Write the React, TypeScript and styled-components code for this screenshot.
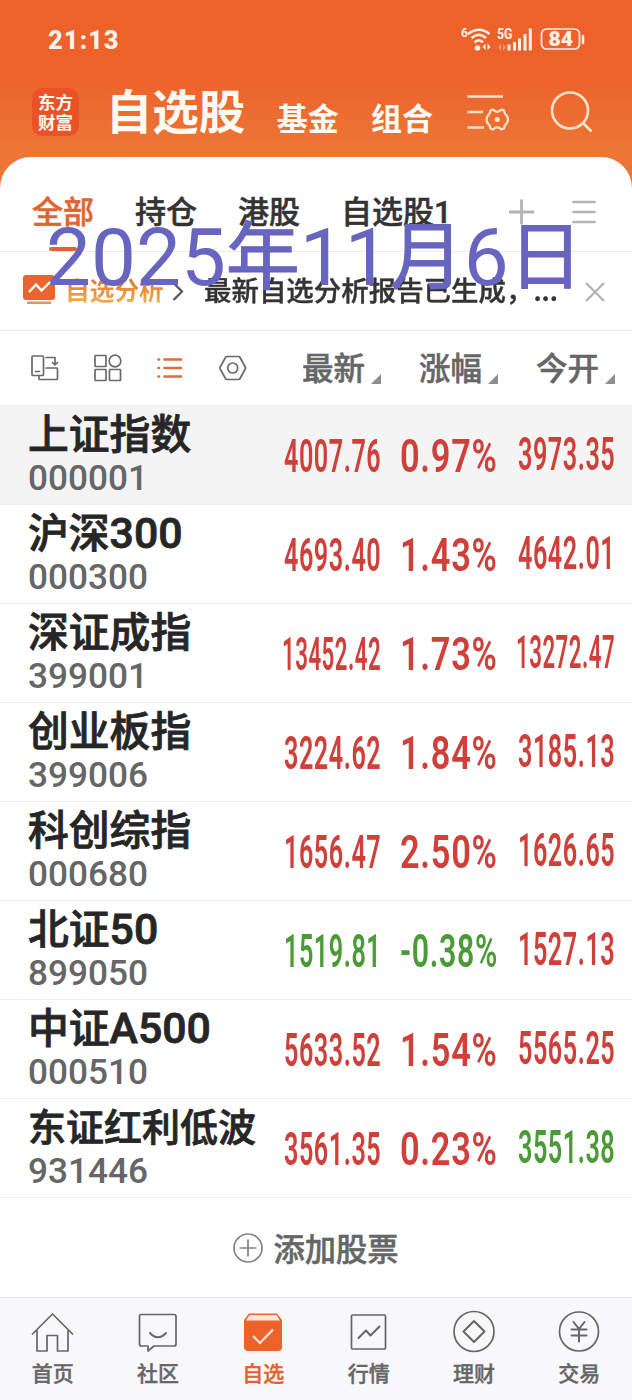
import React, { useLayoutEffect, useRef, useState } from 'react';
import styled, { createGlobalStyle } from 'styled-components';

const CJK = '"Noto Sans CJK SC", sans-serif';
const DIGIT = 'Roboto, "Noto Sans CJK SC", sans-serif';

const GlobalStyle = createGlobalStyle`
  * { box-sizing: border-box; }
  body { margin: 0; background: #fff; font-family: ${CJK}; }
  svg { display: block; flex: none; }
`;

/* ---------- shared ---------- */

const FitBox = styled.span<{ $w: number }>`
  display: block;
  flex: none;
  width: ${p => p.$w}px;
  white-space: nowrap;
`;
const FitInner = styled.span`
  display: inline-block;
  transform-origin: 0 50%;
`;

/* Condenses or widens one line of text to fill the given width. */
function FitText({ width, children, className }: { width: number; children: React.ReactNode; className?: string }) {
  const ref = useRef<HTMLSpanElement>(null);
  const [scale, setScale] = useState(1);
  useLayoutEffect(() => {
    if (ref.current && ref.current.offsetWidth) setScale(width / ref.current.offsetWidth);
  }, [width, children]);
  return (
    <FitBox $w={width} className={className}>
      <FitInner ref={ref} style={{ transform: `scaleX(${scale})` }}>{children}</FitInner>
    </FitBox>
  );
}

const Screen = styled.div`
  position: relative;
  width: 632px;
  height: 1400px;
  display: flex;
  flex-direction: column;
  overflow: hidden;
  background: linear-gradient(#ed622b 0, #ed622b 76px, #ec7636 150px, #ec7636 100%);
`;

/* ---------- status bar ---------- */

const StatusBar = styled.div`
  height: 80px;
  flex: none;
  display: flex;
  justify-content: space-between;
  padding: 0 45px 0 48px;
  color: #fff1e8;
`;
const Clock = styled(FitText)`
  font: 900 25px/81px ${DIGIT};
  letter-spacing: 1px;
`;
const StatusIcons = styled.div`
  display: flex;
  padding-top: 24px;
`;

/* ---------- title bar ---------- */

const TitleBar = styled.div`
  height: 77px;
  flex: none;
  display: flex;
  padding: 0 36px 0 32px;
  color: #fffaf3;
`;
const Logo = styled.div`
  width: 47px;
  height: 48px;
  margin-top: 8px;
  border-radius: 10px;
  background: #ea5328;
  font: 700 17.5px/19.5px ${CJK};
  padding: 4px 0 0 6px;
  white-space: pre;
`;
const Title = styled.h1`
  margin: 0 0 0 27px;
  width: 172px;
  font: 700 46.5px/57px ${CJK};
`;
const TitleLink = styled.div`
  width: 95px;
  font: 700 31px/73px ${CJK};
`;
const FilterButton = styled.div`
  padding-top: 12px;
  margin-left: 1px;
  width: 84px;
`;
const SearchButton = styled.div`
  padding-top: 10px;
`;

/* ---------- sheet ---------- */

const Sheet = styled.div`
  flex: 1;
  display: flex;
  flex-direction: column;
  border-radius: 31px 31px 0 0;
  background: #fff;
  overflow: hidden;
`;
const Tabs = styled.div`
  height: 95px;
  flex: none;
  display: flex;
  padding-left: 32px;
  border-bottom: 1px solid #ececec;
`;
const Tab = styled.div<{ $active?: boolean; $w: number }>`
  width: ${p => p.$w}px;
  flex: none;
  padding-top: 32px;
  font: 500 31px/48px ${DIGIT};
  -webkit-text-stroke: 0.5px currentColor;
  color: ${p => (p.$active ? '#e2632f' : '#333')};
  &::after {
    content: '';
    display: ${p => (p.$active ? 'block' : 'none')};
    width: 28px;
    height: 4px;
    margin: 10px 0 0 17px;
    border-radius: 2px;
    background: #e2632f;
  }
`;
const TabTool = styled.div`
  padding-top: 42px;
  width: 63px;
`;

const Notice = styled.div`
  height: 79px;
  flex: none;
  display: flex;
  padding-left: 22px;
  border-bottom: 1px solid #ececec;
`;
const NoticeIcon = styled.div`
  padding-top: 21px;
  width: 43px;
`;
const NoticeTitle = styled.div`
  font: 700 24.7px/74px ${CJK};
  background: linear-gradient(#e8702f 25px, #eeb050 52px);
  -webkit-background-clip: text;
  background-clip: text;
  color: transparent;
  width: 106px;
  white-space: nowrap;
`;
const NoticeText = styled(FitText)`
  margin-left: 18px;
  font: 500 27.3px/75px ${CJK};
  -webkit-text-stroke: 0.4px currentColor;
  color: #333;
`;
const NoticeArrow = styled.div`
  padding-top: 29px;
  width: 15px;
`;
const NoticeClose = styled.div`
  margin: 29px 0 0 27px;
`;

/* ---------- column heads ---------- */

const ColumnBar = styled.div`
  height: 75px;
  flex: none;
  display: flex;
  padding: 0 17px 1px 31px;
  justify-content: space-between;
`;
const ViewModes = styled.div`
  display: flex;
  align-items: center;
  gap: 34.5px;
`;
const Heads = styled.div`
  display: flex;
`;
const Head = styled.div`
  width: 117px;
  display: flex;
  justify-content: flex-end;
  gap: 6px;
  font: 500 31.5px/70px ${CJK};
  -webkit-text-stroke: 0.5px currentColor;
  color: #666;
  &::after {
    content: '';
    width: 10px;
    height: 10px;
    margin-top: 43px;
    background: #8d8d92;
    clip-path: polygon(100% 0, 100% 100%, 0 100%);
  }
`;

/* ---------- rows ---------- */

const Row = styled.div<{ $selected?: boolean }>`
  height: 99px;
  flex: none;
  display: flex;
  padding: 0 17px 0 28px;
  border-bottom: 1px solid #efefef;
  background: ${p => (p.$selected ? '#f4f4f4' : '#fff')};
  box-shadow: 0 -1px 0 ${p => (p.$selected ? '#f4f4f4' : 'transparent')};
`;
const NameCell = styled.div`
  flex: 1;
`;
const Name = styled.div<{ $small?: boolean }>`
  height: 58px;
  font: 500 ${p => (p.$small ? 38 : 40.8)}px/52px ${CJK};
  -webkit-text-stroke: 0.8px currentColor;
  color: #262626;
  white-space: nowrap;
`;
const NameLatin = styled.span`
  font: 500 42.8px/52px ${DIGIT};
`;
const Code = styled.div`
  font: 500 35.2px/29px ${DIGIT};
  color: #666;
`;
const Value = styled(FitText)<{ $down?: boolean; $lift?: boolean; $gap: number }>`
  margin-left: ${p => p.$gap}px;
  font: 600 47px/${p => (p.$lift ? 95 : 100)}px ${DIGIT};
  letter-spacing: 1px;
  color: ${p => (p.$down ? '#4a9a35' : '#d0403a')};
`;

const AddStock = styled.div`
  height: 99px;
  flex: none;
  display: flex;
  align-items: center;
  justify-content: center;
  gap: 10px;
  font: 500 31.3px/98px ${CJK};
  -webkit-text-stroke: 0.5px currentColor;
  color: #666;
`;

/* ---------- bottom navigation ---------- */

const BottomNav = styled.div`
  flex: 1;
  display: grid;
  grid-template-columns: repeat(6, 1fr);
  border-top: 1px solid #e6e6e8;
  background: #f8f8fa;
`;
const NavItem = styled.div<{ $active?: boolean }>`
  display: flex;
  flex-direction: column;
  align-items: center;
  padding-top: 11px;
  font: 500 21px/38px ${CJK};
  -webkit-text-stroke: 0.4px currentColor;
  color: ${p => (p.$active ? '#e2632f' : '#666')};
`;

const DateMark = styled.div`
  position: absolute;
  left: 46px;
  top: 203px;
  height: 100px;
  white-space: nowrap;
  font: 400 80px/100px ${DIGIT};
  color: #6865c0;
`;
const DateUnit = styled.span`
  position: relative;
  top: -2px;
  font: 400 74px/100px ${CJK};
  -webkit-text-stroke: 1px currentColor;
`;

/* ---------- data ---------- */

type Stock = { name: string; latin?: string; code: string; last: string; pct: string; open: string; down?: boolean; openDown?: boolean };
const stocks: Stock[] = [
  { name: '上证指数', code: '000001', last: '4007.76', pct: '0.97%', open: '3973.35' },
  { name: '沪深', latin: '300', code: '000300', last: '4693.40', pct: '1.43%', open: '4642.01' },
  { name: '深证成指', code: '399001', last: '13452.42', pct: '1.73%', open: '13272.47' },
  { name: '创业板指', code: '399006', last: '3224.62', pct: '1.84%', open: '3185.13' },
  { name: '科创综指', code: '000680', last: '1656.47', pct: '2.50%', open: '1626.65' },
  { name: '北证', latin: '50', code: '899050', last: '1519.81', pct: '-0.38%', open: '1527.13', down: true },
  { name: '中证', latin: 'A500', code: '000510', last: '5633.52', pct: '1.54%', open: '5565.25' },
  { name: '东证红利低波', code: '931446', last: '3561.35', pct: '0.23%', open: '3551.38', openDown: true },
];

const line = { fill: 'none', stroke: 'currentColor', strokeWidth: 1.7, strokeLinejoin: 'round' as const, strokeLinecap: 'round' as const };

const navItems = [
  { label: '首页', icon: <g {...line} strokeLinecap="butt"><path d="M1 25.500 21.500 5l20.500 20.500M6 21.500V42H16V26.500H26.500V42H37V21.500" /></g> },
  { label: '社区', icon: <g {...line}><path d="M5 5.500H38Q40 5.500 40 7.500V35Q40 37 38 37H18L12 42V37H5.500Q3.500 37 3.500 35V7.500Q3.500 5.500 5 5.500Z" /><path d="M14 24Q22 32.500 30 24" strokeWidth="2" /></g> },
  {
    label: '自选', active: true, icon: (
      <g>
        <path d="M8 4.500H36L41 11V38Q41 42 37 42H7Q3 42 3 38V11Z" fill="#ed622b" />
        <path d="M8.500 6H35.500L39 11.500H5Z" fill="#fbe9df" />
        <path d="M12 27 19 34 32 20.500" fill="none" stroke="#fde6d8" strokeWidth="2.200" />
      </g>
    ),
  },
  { label: '行情', icon: <g {...line}><rect x="4.500" y="6" width="34" height="34" rx="1" /><path d="M11.500 29 19 21.500 23.500 26.500 32.500 17.500" strokeWidth="2" /></g> },
  { label: '理财', icon: <g {...line}><circle cx="22" cy="22.500" r="20" /><path d="M22 12 32.500 22.500 22 33 11.500 22.500Z" strokeWidth="2" /></g> },
  { label: '交易', icon: <g {...line}><circle cx="22" cy="22.500" r="19.500" /><path d="M16.500 13 22 20 27.500 13M14.500 20.500H29.500M14.500 26.500H29.500M22 20V32.500" strokeWidth="2" /></g> },
];

export default function App() {
  return (
    <Screen>
      <GlobalStyle />
      <StatusBar>
        <Clock width={71}>21:13</Clock>
        <StatusIcons>
          <svg width="126" height="30" viewBox="0 0 126 30" fill="none" stroke="currentColor">
            <text x="0" y="13" fontFamily="Roboto" fontWeight="700" fontSize="12" fill="currentColor" stroke="none">6</text>
            <g strokeWidth="2.600">
              <path d="M7 10Q18 1.500 28.500 10" />
              <path d="M10.500 14Q18 7.500 25 14" />
              <path d="M13.500 18.500Q18 14 22 18.500" />
            </g>
            <circle cx="16.500" cy="24" r="2.800" fill="currentColor" stroke="none" />
            <path d="M24.500 19.500v6.500l-3-3zM26.500 19.500v6.500l3-3z" fill="currentColor" stroke="none" />
            <text x="36" y="15" fontFamily="Roboto" fontWeight="700" fontSize="14" textLength="15.500" lengthAdjust="spacingAndGlyphs" fill="currentColor" stroke="none">5G</text>
            <path d="M40 20v6.500l-3-3zM42 20v6.500l3-3z" fill="currentColor" stroke="none" opacity=".4" />
            <path d="M48 26.500v-6M53.500 26.500v-8.500M58.500 26.500V14.500M64 26.500V10M69.300 26.500V4.500" strokeWidth="3" />
            <rect x="80.500" y="5" width="38" height="20" rx="5" strokeWidth="1.700" />
            <path d="M122 12v7" strokeWidth="2.500" strokeLinecap="round" />
            <text x="87.500" y="22.300" fontFamily="Roboto" fontWeight="900" fontSize="20.500" textLength="24.500" lengthAdjust="spacingAndGlyphs" fill="currentColor" stroke="none">84</text>
          </svg>
        </StatusIcons>
      </StatusBar>

      <TitleBar>
        <Logo>{'东方\n财富'}</Logo>
        <Title>自选股</Title>
        <TitleLink>基金</TitleLink>
        <TitleLink>组合</TitleLink>
        <FilterButton>
          <svg width="44" height="40" viewBox="0 0 44 40" fill="none" stroke="#ffe3cd" strokeWidth="2.600">
            <path d="M.5 4.500H36M.5 20H16M.5 35.500H17" />
            <path d="M23.700 18.200Q26.500 17 27.200 18.600Q30.200 20.800 33.200 18.600Q34.500 17 37 18.600Q37.500 22.300 40 24.200Q41.800 27.500 40 30.800Q37.500 32.800 37 36.400Q34.500 38 33.200 36.400Q30.200 34.400 27.200 36.400Q25.800 38 23.500 36.400Q23 32.800 20.400 30.800Q18.600 27.500 20.400 24.200Q23 22.300 23.700 18.200Z" strokeWidth="2.300" strokeLinejoin="round" />
            <circle cx="30.200" cy="27.500" r="2.500" fill="#ffe3cd" stroke="none" />
          </svg>
        </FilterButton>
        <SearchButton>
          <svg width="46" height="46" viewBox="0 0 46 46" fill="none" stroke="#ffe3cd" strokeWidth="2.600">
            <circle cx="20" cy="20.500" r="18" />
            <path d="M32.500 32.500 41.500 41.500" />
          </svg>
        </SearchButton>
      </TitleBar>

      <Sheet>
        <Tabs>
          <Tab $w={103} $active>全部</Tab>
          <Tab $w={103}>持仓</Tab>
          <Tab $w={103}>港股</Tab>
          <Tab $w={167}>自选股1</Tab>
          <TabTool>
            <svg width="26" height="26" viewBox="0 0 26 26" stroke="#b4b4b4" strokeWidth="2.800"><path d="M1 13H26M13.500 .5V25.500" /></svg>
          </TabTool>
          <TabTool>
            <svg width="26" height="26" viewBox="0 0 26 26" stroke="#b4b4b4" strokeWidth="2.600" strokeLinecap="round"><path d="M3.500 3H24.500M3.500 13H24.500M3.500 23H24.500" /></svg>
          </TabTool>
        </Tabs>

        <Notice>
          <NoticeIcon>
            <svg width="34" height="32" viewBox="0 0 34 32">
              <rect x="1" y="2" width="32" height="25" rx="3" fill="#eb6430" />
              <path d="M7 19 14 11.500 19.500 17.500 28 9" fill="none" stroke="#fff" strokeWidth="2.400" />
              <rect x="5" y="28.500" width="24" height="2.500" fill="#f09055" />
            </svg>
          </NoticeIcon>
          <NoticeTitle>自选分析</NoticeTitle>
          <NoticeArrow>
            <svg width="15" height="20" viewBox="0 0 15 20" fill="none" stroke="#555" strokeWidth="2.200"><path d="M2.500 2 11 10.500 2.500 19" /></svg>
          </NoticeArrow>
          <NoticeText width={354}>最新自选分析报告已生成，...</NoticeText>
          <NoticeClose>
            <svg width="20" height="22" viewBox="0 0 20 22" stroke="#b4b4b4" strokeWidth="2.300"><path d="M1 2 19 20M19 2 1 20" /></svg>
          </NoticeClose>
        </Notice>

        <ColumnBar>
          <ViewModes>
            <svg width="28" height="28" viewBox="0 0 28 28" color="#6a6a6a">
              <g {...line}>
                <rect x="1" y="2" width="11.500" height="19.500" rx="1" />
                <path d="M4.500 17.500H8.500M15 3.500H24V10.500M21.500 8.500 24 11 26.500 8.500M15 14H25.500Q26.500 14 26.500 15V24.500Q26.500 25.500 25.500 25.500H9Q8 25.500 8 24.500V22" />
              </g>
            </svg>
            <svg width="28" height="28" viewBox="0 0 28 28" color="#6a6a6a">
              <g {...line}>
                <rect x="1" y="1.500" width="11" height="11" rx=".5" /><circle cx="21" cy="7" r="5.800" />
                <rect x="1" y="15.500" width="11" height="11" rx=".5" /><rect x="15.500" y="15.500" width="11" height="11" rx=".5" />
              </g>
            </svg>
            <svg width="28" height="28" viewBox="0 0 28 28" fill="none" stroke="#df6d3c" strokeWidth="2.700" strokeLinecap="round">
              <path d="M2.500 5.500h.5M8.500 5.500H25M2.500 14h.5M8.500 14H25M2.500 22.500h.5M8.500 22.500H25" />
            </svg>
            <svg width="28" height="28" viewBox="0 0 28 28" color="#6a6a6a">
              <g {...line}>
                <path d="M8 2.500H19.500Q20.500 2.500 21 3.500L26.300 13Q26.800 14 26.300 15L21 24.500Q20.500 25.500 19.500 25.500H8Q7 25.500 6.500 24.500L1.200 15Q.7 14 1.200 13L6.500 3.500Q7 2.500 8 2.500Z" />
                <circle cx="13.700" cy="14" r="5" />
              </g>
            </svg>
          </ViewModes>
          <Heads>
            <Head>最新</Head>
            <Head>涨幅</Head>
            <Head>今开</Head>
          </Heads>
        </ColumnBar>

        {stocks.map((s, i) => (
          <Row key={s.code} $selected={i === 0}>
            <NameCell>
              <Name $small={s.name.length > 4}>{s.name}{s.latin && <NameLatin>{s.latin}</NameLatin>}</Name>
              <Code>{s.code}</Code>
            </NameCell>
            <Value width={s.last.length > 7 ? 99 : 97} $gap={0} $down={s.down}>{s.last}</Value>
            <Value width={98} $gap={19} $down={s.down}>{s.pct}</Value>
            <Value width={s.open.length > 7 ? 99 : 97} $gap={s.open.length > 7 ? 18 : 20} $lift $down={s.openDown}>{s.open}</Value>
          </Row>
        ))}

        <AddStock>
          <svg width="30" height="30" viewBox="0 0 30 30" fill="none" stroke="#858585" strokeWidth="1.700">
            <circle cx="15" cy="15" r="14" /><path d="M6.500 15H23.500M15 6.500V23.500" />
          </svg>
          添加股票
        </AddStock>

        <BottomNav>
          {navItems.map(n => (
            <NavItem key={n.label} $active={n.active}>
              <svg width="44" height="44" viewBox="0 0 44 44">{n.icon}</svg>
              {n.label}
            </NavItem>
          ))}
        </BottomNav>
      </Sheet>

      <DateMark>2025<DateUnit>年</DateUnit>11<DateUnit>月</DateUnit>6<DateUnit>日</DateUnit></DateMark>
    </Screen>
  );
}
